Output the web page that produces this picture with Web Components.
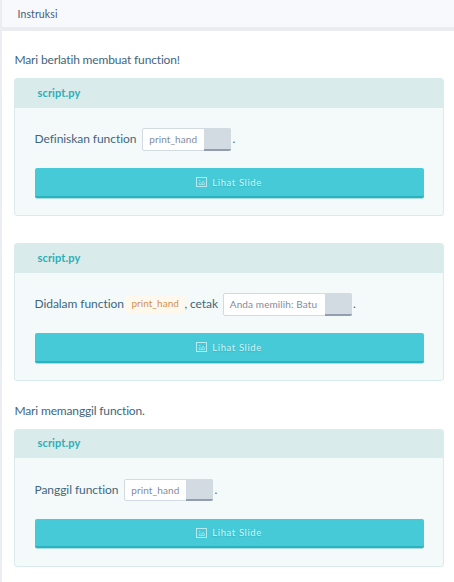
<!DOCTYPE html>
<html lang="id">
<head>
<meta charset="utf-8">
<title>Instruksi</title>
<style>
html,body{margin:0;height:100%;background:#fff;overflow:hidden;font-family:Lato,"Liberation Sans",sans-serif;font-variant-ligatures:none}
</style>
</head>
<body>
<lesson-panel heading="Instruksi">
  <lesson-text>Mari berlatih membuat function!</lesson-text>
  <script-card filename="script.py">Definiskan function <answer-field style="--w:89px;--ml:3px" value="print_hand"></answer-field>.</script-card>
  <script-card filename="script.py" style="margin-top:27px">Didalam function <code-chip>print_hand</code-chip>, cetak <answer-field style="--w:129px;--ml:2px" value="Anda memilih: Batu"></answer-field>.</script-card>
  <lesson-text style="--mt:20px;--h:20px">Mari memanggil function.</lesson-text>
  <script-card filename="script.py" style="--head:28px;--hl:26px;--pad:21px;--fh:22px;--lh:21px;--gap:18px;--btn:29px;--label:0px">Panggil function <answer-field style="--w:89px;--ml:3px" value="print_hand"></answer-field>.</script-card>
</lesson-panel>
<script>
const define = (name, html, setup) => customElements.define(name, class extends HTMLElement {
  constructor() {
    super();
    this.attachShadow({mode: 'open'}).innerHTML = html;
  }
  connectedCallback() { if (setup) setup(this, this.shadowRoot); }
});

define('lesson-panel', `
<style>
:host{display:flex;flex-direction:column;box-sizing:border-box;height:582px;border-left:2px solid #eaedf1}
header{box-sizing:border-box;height:31px;border-bottom:4px solid #eaecf0;background:#f8f9fd;padding-left:15.5px;font-size:10.5px;line-height:28px;color:#4a5a72;letter-spacing:.1px}
main{display:flex;flex-direction:column;padding:19px 10px 0 12px}
</style><header></header><main><slot></slot></main>`,
(el, root) => root.querySelector('header').textContent = el.getAttribute('heading'));

define('lesson-text', `
<style>:host{display:block;height:var(--h,20px);margin:var(--mt,0) 0 8px;padding-left:.5px;font-size:12px;line-height:20px;color:#41667e;letter-spacing:-.16px}</style><slot></slot>`);

define('slide-button', `
<style>
:host{display:block}
button{display:flex;align-items:center;justify-content:center;gap:5px;box-sizing:border-box;width:100%;height:var(--btn,30px);margin:0;padding:0;border:0;border-bottom:2px solid #2cb1bf;border-radius:2px;background:#46cad7;box-shadow:0 1px 0 #a9dfe3;color:#d3f5f7;font:9.5px/16px Lato,"Liberation Sans",sans-serif;letter-spacing:.62px;text-shadow:0 1px 1px #279fab80}
svg{display:block;width:11px;height:10px}
span{margin-right:.8px;padding-top:var(--label,1px)}
</style>
<button><svg viewBox="0 0 11 10" fill="none" stroke="#b5ebef"><rect x=".5" y=".5" width="10" height="9"/><path d="M3 7.5V6.2L4.5 5.2 6 6.8 7.2 4.2 8.5 6v1.5z" stroke-width=".7"/><path d="M3 3.5h1.3" stroke-width=".8"/></svg><span>Lihat Slide</span></button>`);

define('script-card', `
<style>
:host{display:block;box-sizing:border-box;height:138px;border:1px solid #d9ebea;border-radius:3px;background:#f4fafa}
header{height:var(--head,29px);background:#d9ebea;padding-left:22.5px;font-size:11px;line-height:var(--hl,28px);font-weight:700;color:#2cafb9;letter-spacing:.12px;border-radius:2px 2px 0 0}
section{padding:var(--pad,20px) 19px 0 20px}
p{display:flex;align-items:center;box-sizing:border-box;height:var(--fh,23px);margin:0 0 var(--gap,17px) -.5px;padding-bottom:1px;font-size:12px;line-height:var(--lh,20px);color:#41667e;letter-spacing:-.06px;white-space:pre}
::slotted(*){white-space:normal}
</style>
<header></header><section><p><slot></slot></p><slide-button></slide-button></section>`,
(el, root) => root.querySelector('header').textContent = el.getAttribute('filename'));

define('answer-field', `
<style>
:host{display:flex;flex:none;box-sizing:border-box;width:var(--w);height:var(--fh,23px);margin:0 1px -1px var(--ml);border:1px solid #d2dae2;border-radius:2px;background:#fff}
span{flex:1;padding-left:5.8px;font-size:10px;line-height:20px;color:#828c9e;letter-spacing:.1px;white-space:nowrap}
i{width:27px;margin:-1px -1px -1px 0;box-sizing:border-box;background:#d2dae2;border-bottom:2px solid #929db0;border-radius:0 2px 2px 0}
</style><span></span><i></i>`,
(el, root) => root.querySelector('span').textContent = el.getAttribute('value'));

define('code-chip', `
<style>:host{display:block;box-sizing:border-box;width:59px;height:18px;margin:0 -1px 0 -.5px;padding:0 5px;border-radius:3px;background:#fff9ed;color:#d3914f;font-size:10px;line-height:17px;letter-spacing:.05px}</style><slot></slot>`);
</script>
</body>
</html>
